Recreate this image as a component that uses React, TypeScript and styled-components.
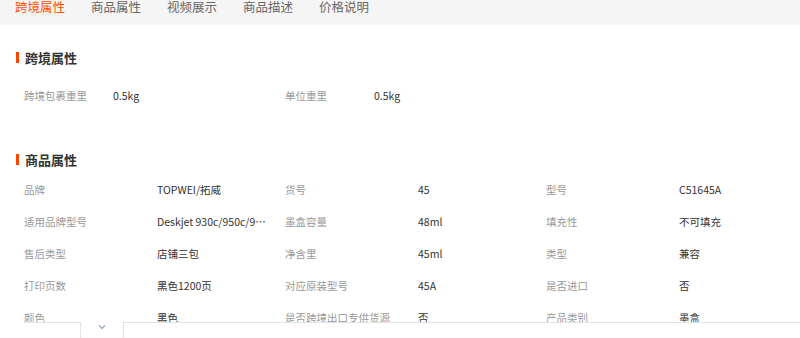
import React from "react";
import styled, { createGlobalStyle } from "styled-components";

const GlobalStyle = createGlobalStyle`
  html, body {
    margin: 0;
    padding: 0;
    background: #fff;
  }
  body {
    font-family: "Noto Sans CJK SC", "Noto Sans", sans-serif;
    color: #333;
  }
`;

const tabs = ["跨境属性", "商品属性", "视频展示", "商品描述", "价格说明"];

const crossBorder = [
  ["跨境包裹重里", "0.5kg"],
  ["单位重里", "0.5kg"],
];

const attrs = [
  ["品牌", "TOPWEI/拓威"],
  ["货号", "45"],
  ["型号", "C51645A"],
  ["适用品牌型号", "Deskjet 930c/950c/940c/970c"],
  ["墨盒容量", "48ml"],
  ["填充性", "不可填充"],
  ["售后类型", "店铺三包"],
  ["净含里", "45ml"],
  ["类型", "兼容"],
  ["打印页数", "黑色1200页"],
  ["对应原装型号", "45A"],
  ["是否进口", "否"],
  ["颜色", "黑色"],
  ["是否跨境出口专供货源", "否"],
  ["产品类别", "墨盒"],
];

const Page = styled.div`
  width: 800px;
  height: 338px;
  overflow: hidden;
`;

const TabBar = styled.div`
  height: 25px;
  background: #f5f5f5;
  display: flex;
  align-items: flex-start;
  gap: 26px;
  padding-left: 15px;
`;

const Tab = styled.div<{ $active?: boolean }>`
  font-size: 12.5px;
  line-height: 15px;
  margin-top: -1px;
  color: ${(p) => (p.$active ? "#ff5000" : "#666")};
  white-space: nowrap;
`;

const Section = styled.section<{ $top: number }>`
  margin-top: ${(p) => p.$top}px;
`;

const Title = styled.h3<{ $gap: number }>`
  margin: 0 0 ${(p) => p.$gap}px;
  height: 20px;
  display: flex;
  align-items: center;
  gap: 6px;
  padding-left: 16px;
  font-size: 13px;
  font-weight: 700;
  color: #333;

  &::before {
    content: "";
    width: 3px;
    height: 11px;
    background: #ff4400;
  }
`;

const Grid = styled.div<{ $cols: string; $clip?: number }>`
  display: grid;
  grid-template-columns: ${(p) => p.$cols};
  grid-auto-rows: 32px;
  padding-left: 24px;
  font-size: 10.5px;
  ${(p) => (p.$clip ? `height: ${p.$clip}px; overflow: hidden;` : "")}
`;

const Label = styled.div`
  line-height: 32px;
  color: #999;
  white-space: nowrap;
`;

const Value = styled.div`
  line-height: 32px;
  color: #333;
  min-width: 0;
  max-width: 114px;
  white-space: nowrap;
  overflow: hidden;
  text-overflow: ellipsis;
`;

const FoldBar = styled.div`
  display: flex;
  padding-left: 24px;
`;

const FoldLine = styled.div<{ $width?: number }>`
  border-top: 1px solid #e2e2e2;
  ${(p) => (p.$width ? `width: ${p.$width}px;` : "flex: 1;")}
`;

const FoldTab = styled.button`
  width: 44px;
  height: 18px;
  padding: 2px 0 0;
  border: 1px solid #e2e2e2;
  border-top: none;
  border-radius: 0 0 4px 4px;
  background: #fff;
  display: flex;
  justify-content: center;
  align-items: flex-start;
  cursor: pointer;
`;

function Chevron() {
  return (
    <svg width="8" height="6" viewBox="0 0 8 6">
      <polyline
        points="1,1.5 4,4.5 7,1.5"
        fill="none"
        stroke="#8ea2b8"
        strokeWidth="1.2"
      />
    </svg>
  );
}

export default function App() {
  return (
    <Page>
      <GlobalStyle />
      <TabBar>
        {tabs.map((t, i) => (
          <Tab key={t} $active={i === 0}>
            {t}
          </Tab>
        ))}
      </TabBar>

      <Section $top={22.5}>
        <Title $gap={12}>跨境属性</Title>
        <Grid $cols="repeat(2, 89px 172px)">
          {crossBorder.map(([k, v]) => (
            <React.Fragment key={k}>
              <Label>{k}</Label>
              <Value>{v}</Value>
            </React.Fragment>
          ))}
        </Grid>
      </Section>

      <Section $top={37.5}>
        <Title $gap={5}>商品属性</Title>
        <Grid $cols="repeat(3, 133px 128px)" $clip={148}>
          {attrs.map(([k, v]) => (
            <React.Fragment key={k}>
              <Label>{k}</Label>
              <Value>{v}</Value>
            </React.Fragment>
          ))}
        </Grid>
      </Section>

      <FoldBar>
        <FoldLine $width={56} />
        <FoldTab aria-label="展开">
          <Chevron />
        </FoldTab>
        <FoldLine />
      </FoldBar>
    </Page>
  );
}
